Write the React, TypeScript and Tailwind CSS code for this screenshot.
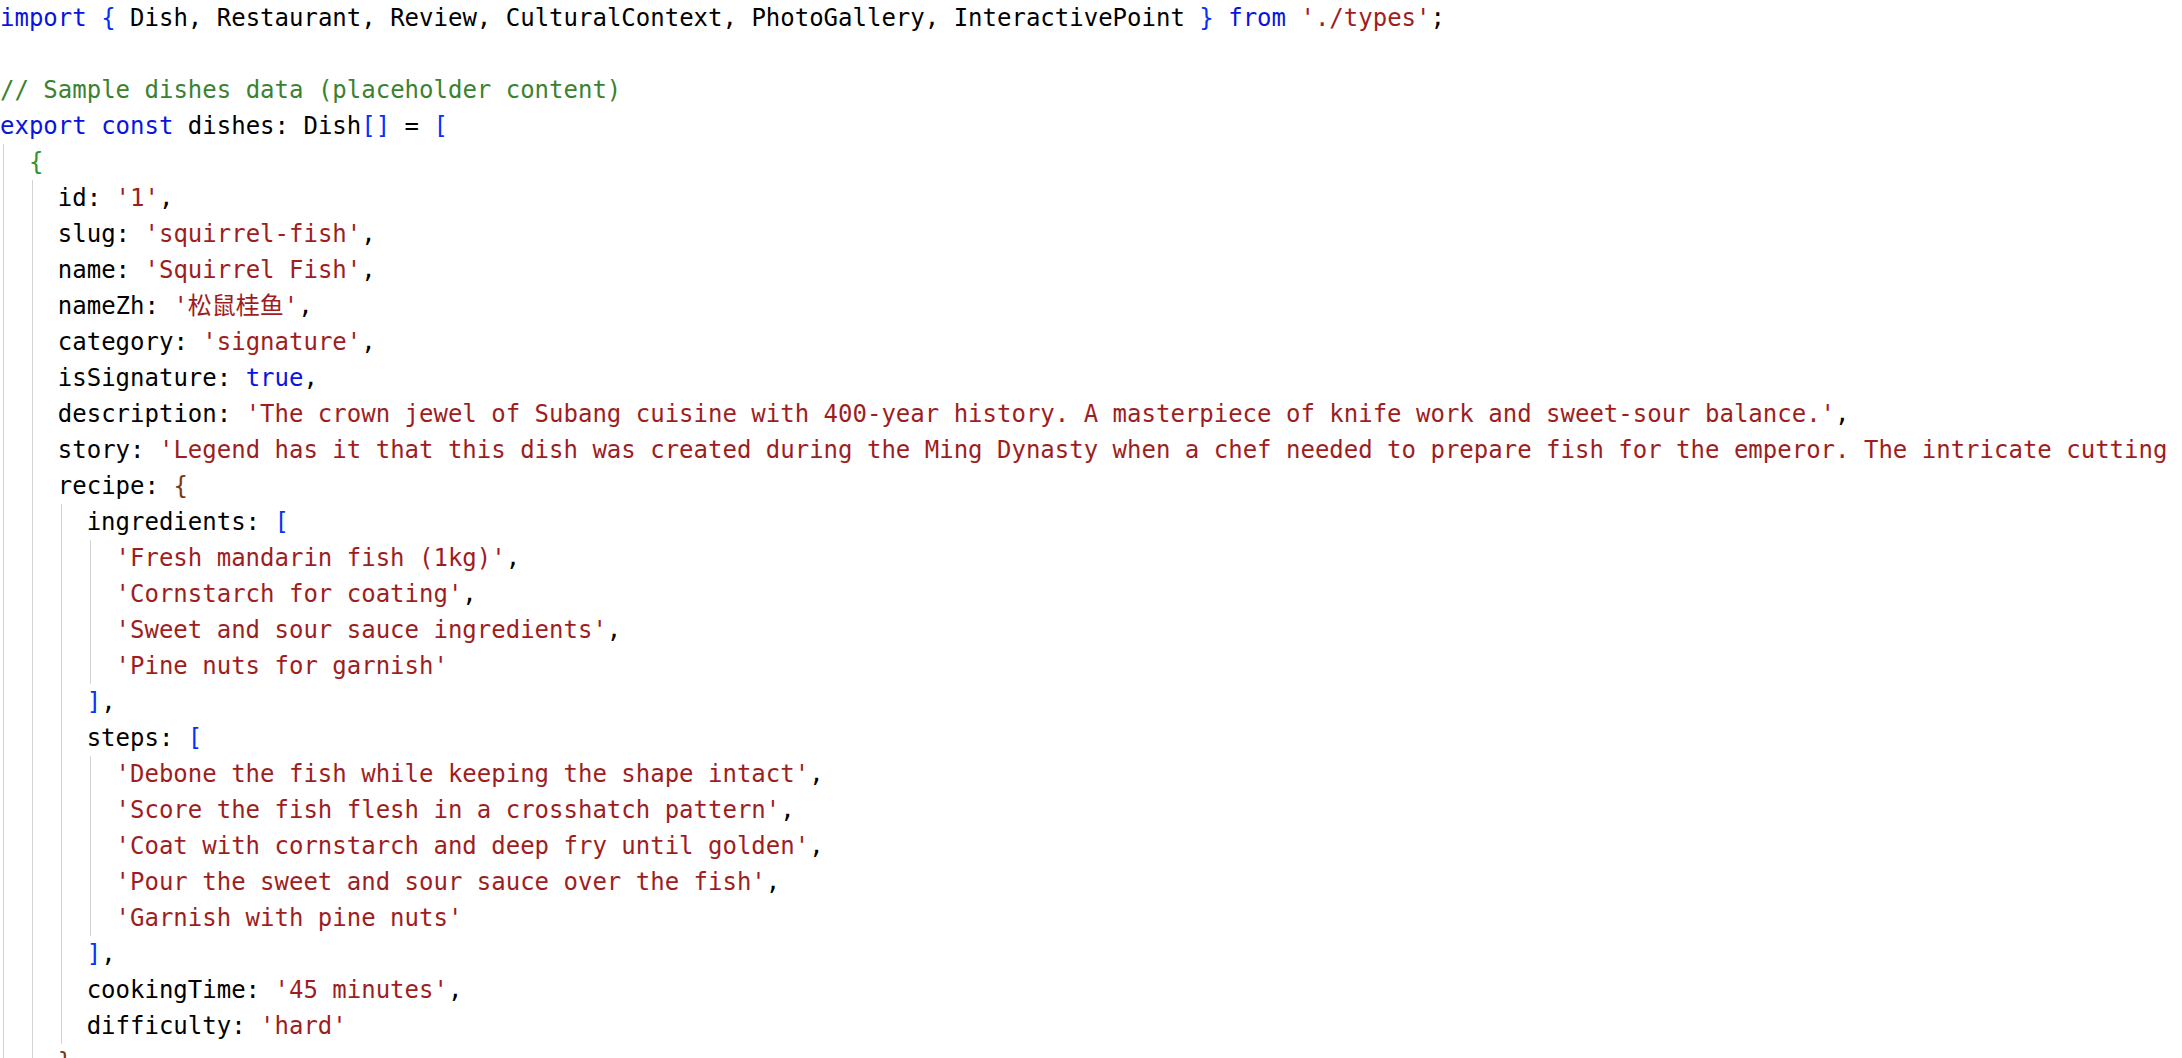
import React from 'react';

type Tok = [string, string];
type Line = { indent: number; toks: Tok[] };

const K = 'text-[#0a14e0]';
const B1 = 'text-[#0431fa]';
const B2 = 'text-[#319331]';
const B3 = 'text-[#7b3814]';
const S = 'text-[#9e1e1e]';
const C = 'text-[#3a8230]';
const P = 'text-[#000000]';

const prop = (indent: number, name: string, value: string, comma = true): Line => ({
  indent,
  toks: [
    [P, `${name}: `],
    [S, value],
    ...(comma ? ([[P, ',']] as Tok[]) : []),
  ],
});

const str = (indent: number, value: string, comma = true): Line => ({
  indent,
  toks: [[S, value], ...(comma ? ([[P, ',']] as Tok[]) : [])],
});

const lines: Line[] = [
  {
    indent: 0,
    toks: [
      [K, 'import'],
      [P, ' '],
      [B1, '{'],
      [P, ' Dish, Restaurant, Review, CulturalContext, PhotoGallery, InteractivePoint '],
      [B1, '}'],
      [P, ' '],
      [K, 'from'],
      [P, ' '],
      [S, "'./types'"],
      [P, ';'],
    ],
  },
  { indent: 0, toks: [] },
  { indent: 0, toks: [[C, '// Sample dishes data (placeholder content)']] },
  {
    indent: 0,
    toks: [
      [K, 'export'],
      [P, ' '],
      [K, 'const'],
      [P, ' dishes: Dish'],
      [B1, '[]'],
      [P, ' = '],
      [B1, '['],
    ],
  },
  { indent: 1, toks: [[B2, '{']] },
  prop(2, 'id', "'1'"),
  prop(2, 'slug', "'squirrel-fish'"),
  prop(2, 'name', "'Squirrel Fish'"),
  prop(2, 'nameZh', "'松鼠桂鱼'"),
  prop(2, 'category', "'signature'"),
  { indent: 2, toks: [[P, 'isSignature: '], [K, 'true'], [P, ',']] },
  prop(
    2,
    'description',
    "'The crown jewel of Subang cuisine with 400-year history. A masterpiece of knife work and sweet-sour balance.'"
  ),
  prop(
    2,
    'story',
    "'Legend has it that this dish was created during the Ming Dynasty when a chef needed to prepare fish for the emperor. The intricate cutting technique makes the fish resemble a squirrel.'"
  ),
  { indent: 2, toks: [[P, 'recipe: '], [B3, '{']] },
  { indent: 3, toks: [[P, 'ingredients: '], [B1, '[']] },
  str(4, "'Fresh mandarin fish (1kg)'"),
  str(4, "'Cornstarch for coating'"),
  str(4, "'Sweet and sour sauce ingredients'"),
  str(4, "'Pine nuts for garnish'", false),
  { indent: 3, toks: [[B1, ']'], [P, ',']] },
  { indent: 3, toks: [[P, 'steps: '], [B1, '[']] },
  str(4, "'Debone the fish while keeping the shape intact'"),
  str(4, "'Score the fish flesh in a crosshatch pattern'"),
  str(4, "'Coat with cornstarch and deep fry until golden'"),
  str(4, "'Pour the sweet and sour sauce over the fish'"),
  str(4, "'Garnish with pine nuts'", false),
  { indent: 3, toks: [[B1, ']'], [P, ',']] },
  prop(3, 'cookingTime', "'45 minutes'"),
  prop(3, 'difficulty', "'hard'", false),
  { indent: 2, toks: [[B3, '}'], [P, ',']] },
  { indent: 2, toks: [[P, 'culturalContext: '], [B3, '{']] },
];

export default function App() {
  return (
    <div className="w-[2182px] h-[1058px] overflow-hidden bg-white font-['DejaVu_Sans_Mono','Noto_Sans_CJK_SC',monospace] text-[24px] leading-[36px] text-black">
      <div className="flex flex-col">
        {lines.map((line, i) => (
          <div key={i} className="flex h-[36px] whitespace-pre">
            {Array.from({ length: line.indent }).map((_, j) => (
              <span
                key={j}
                className="ml-[3px] w-[calc(2ch-3px)] shrink-0 h-[36px] border-l border-[#d3d3d3]"
              />
            ))}
            <span className="whitespace-pre">
              {line.toks.map((t, k) => (
                <span key={k} className={t[0]}>
                  {t[1]}
                </span>
              ))}
            </span>
          </div>
        ))}
      </div>
    </div>
  );
}
